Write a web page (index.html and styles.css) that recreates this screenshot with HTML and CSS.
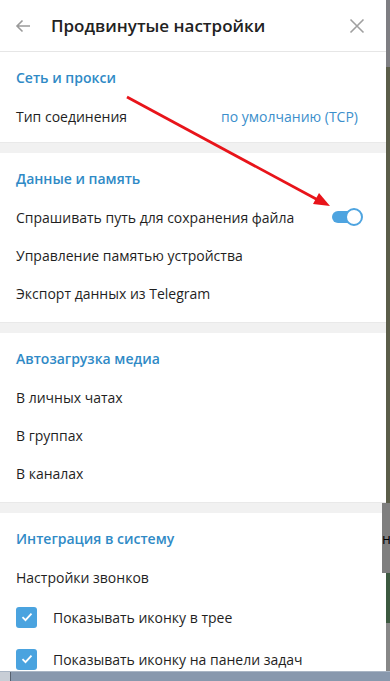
FILE: index.html
```html
<!DOCTYPE html>
<html>
<head>
	<meta charset="UTF-8">
	<title>Продвинутые настройки</title>
	<link rel="stylesheet" href="styles.css">
</head>
<body>
	<div class="screen">
		<div class="panel">
			<div class="head">
				<svg class="back" width="16" height="14" viewBox="0 0 16 14">
					<path d="M15 7H2M7.5 1.5L2 7l5.5 5.5" fill="none" stroke="#9a9a9a" stroke-width="1.6"/>
				</svg>
				<div class="head-title">Продвинутые настройки</div>
				<svg class="close" width="16" height="16" viewBox="0 0 16 16">
					<path d="M1.5 1.5l13 13M14.5 1.5l-13 13" fill="none" stroke="#a0a0a0" stroke-width="1.6"/>
				</svg>
			</div>

			<div class="sec sec-net">
				<div class="sec-title">Сеть и прокси</div>
				<div class="row">
					<span>Тип соединения</span>
					<span class="value">по умолчанию (TCP)</span>
				</div>
			</div>
			<div class="gap"></div>

			<div class="sec">
				<div class="sec-title">Данные и память</div>
				<div class="row">
					<span>Спрашивать путь для сохранения файла</span>
					<span class="toggle"><span class="knob"></span></span>
				</div>
				<div class="row">Управление памятью устройства</div>
				<div class="row">Экспорт данных из Telegram</div>
			</div>
			<div class="gap"></div>

			<div class="sec">
				<div class="sec-title">Автозагрузка медиа</div>
				<div class="row">В личных чатах</div>
				<div class="row">В группах</div>
				<div class="row">В каналах</div>
			</div>
			<div class="gap"></div>

			<div class="sec">
				<div class="sec-title">Интеграция в систему</div>
				<div class="row">Настройки звонков</div>
				<div class="row check-row">
					<span class="check"><svg width="12" height="10" viewBox="0 0 12 10"><path d="M1.5 5.2l3 3 6-6.5" fill="none" stroke="#fff" stroke-width="1.8"/></svg></span>
					Показывать иконку в трее
				</div>
				<div class="row check-row">
					<span class="check"><svg width="12" height="10" viewBox="0 0 12 10"><path d="M1.5 5.2l3 3 6-6.5" fill="none" stroke="#fff" stroke-width="1.8"/></svg></span>
					Показывать иконку на панели задач
				</div>
			</div>
		</div>

		<div class="side">
			<div class="s1"></div>
			<div class="s2"></div>
			<div class="s3">н</div>
			<div class="s4"></div>
			<div class="s5"></div>
		</div>

		<!-- красная стрелка поверх окна -->
		<svg class="arrow" width="390" height="681" viewBox="0 0 390 681">
			<line x1="127" y1="97" x2="318" y2="200" stroke="#e8141a" stroke-width="2.8"/>
			<polygon points="330,206 313,204 319,193" fill="#e8141a"/>
		</svg>
	</div>
	<div class="taskbar">
		<div class="tb-start"></div>
	</div>
</body>
</html>
```

FILE: styles.css
```css
*{
	box-sizing:border-box;
}

body{
	margin:0;
	background:#fff;
	font-family:"Open Sans","Noto Sans",sans-serif;
	color:#1f1f1f;
	overflow:hidden;
}

.screen{
	position:relative;
	display:flex;
	height:671px;
	overflow:hidden;
}

.panel{
	width:386px;
	flex:none;
	background:#fff;
}

.head{
	height:52px;
	border-bottom:1px solid #e6e6e6;
	display:flex;
	align-items:center;
	padding:0 21px 0 15px;
}

.back{
	flex:none;
}

.head-title{
	flex:1;
	margin-left:20px;
	font-size:17px;
	font-weight:600;
	color:#222;
}

.close{
	flex:none;
}

.sec{
	padding:14px 0 10px;
}

.sec-net{
	padding-bottom:7px;
}

.sec-title{
	height:24px;
	line-height:24px;
	margin-bottom:7px;
	padding-left:16px;
	font-size:14px;
	font-weight:600;
	color:#2f8ac6;
}

.row{
	height:38px;
	display:flex;
	align-items:center;
	justify-content:space-between;
	padding:0 28px 0 16px;
	font-size:14px;
	color:#1f1f1f;
}

.value{
	color:#3b8fcc;
}

.toggle{
	position:relative;
	width:30px;
	height:12px;
	margin-right:-4px;
	border-radius:6px;
	background:#4ea4e0;
}

.knob{
	position:absolute;
	right:-1px;
	top:-3px;
	width:18px;
	height:18px;
	border-radius:50%;
	border:2px solid #4ea4e0;
	background:#fff;
}

.check-row{
	height:42px;
	justify-content:flex-start;
}

.check{
	width:21px;
	height:21px;
	margin-right:16px;
	border-radius:3px;
	background:#4aa3df;
	display:flex;
	align-items:center;
	justify-content:center;
}

.gap{
	height:11px;
	background:#f1f1f1;
	border-top:1px solid #e9e9e9;
}

.side{
	flex:1;
	display:flex;
	flex-direction:column;
}

.s1{
	height:67px;
	background:#7e7e82;
}

.s2{
	height:436px;
	background:#5b5d49;
}

.s3{
	height:70px;
	background:#7f7f7f;
	font-size:14px;
	color:#000;
	line-height:72px;
	margin-left:-4px;
	overflow:hidden;
}

.s4{
	height:50px;
	background:#3c5940;
}

.s5{
	flex:1;
	background:#878787;
}

.arrow{
	position:absolute;
	left:0;
	top:0;
	pointer-events:none;
}

.taskbar{
	height:10px;
	display:flex;
	background:#8898ad;
	border-top:1px solid #a9b5c4;
}

.tb-start{
	width:11px;
	background:#c8ced6;
	border-right:1px solid #56606e;
}
```
